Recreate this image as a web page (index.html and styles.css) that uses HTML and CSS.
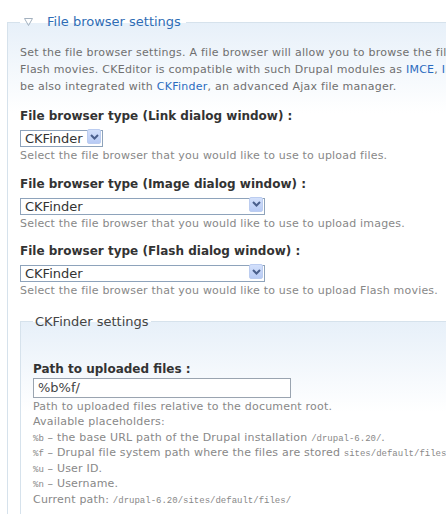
FILE: index.html
```html
<!DOCTYPE html>
<html lang="en">
<head>
    <meta charset="UTF-8">
    <meta name="viewport" content="width=device-width, initial-scale=1.0">
    <title>File browser settings</title>
    <link rel="stylesheet" href="styles.css">
</head>
<body>
    <div class="page">
        <fieldset class="group">
            <legend>
                <svg class="toggle" width="9" height="8" viewBox="0 0 9 8"><path d="M0.5 0.5 H8.5 L4.5 7.5 Z" fill="none" stroke="#a3b1bf" stroke-width="1"/></svg>
                <span>File browser settings</span>
            </legend>

            <p class="description">Set the file browser settings. A file browser will allow you to browse the files stored on the server and embed them as links, images or<br>Flash movies. CKEditor is compatible with such Drupal modules as <a href="#">IMCE</a>, <a href="#">IMCE Wysiwyg API</a>, <a href="#">WebFM</a>, <a href="#">Image Browser</a> or <a href="#">elFinder</a>. CKEditor can<br>be also integrated with <a href="#">CKFinder</a>, an advanced Ajax file manager.</p>

            <div class="form-item">
                <label>File browser type (Link dialog window) :</label>
                <div class="select-wrap short">
                    <select><option>CKFinder</option></select>
                    <span class="select-button"><svg width="9" height="6" viewBox="0 0 9 6"><path d="M1 1 L4.5 4.5 L8 1" fill="none" stroke="#4a5f8c" stroke-width="2"/></svg></span>
                </div>
                <div class="help">Select the file browser that you would like to use to upload files.</div>
            </div>

            <div class="form-item">
                <label>File browser type (Image dialog window) :</label>
                <div class="select-wrap">
                    <select><option>CKFinder</option></select>
                    <span class="select-button"><svg width="9" height="6" viewBox="0 0 9 6"><path d="M1 1 L4.5 4.5 L8 1" fill="none" stroke="#4a5f8c" stroke-width="2"/></svg></span>
                </div>
                <div class="help">Select the file browser that you would like to use to upload images.</div>
            </div>

            <div class="form-item">
                <label>File browser type (Flash dialog window) :</label>
                <div class="select-wrap">
                    <select><option>CKFinder</option></select>
                    <span class="select-button"><svg width="9" height="6" viewBox="0 0 9 6"><path d="M1 1 L4.5 4.5 L8 1" fill="none" stroke="#4a5f8c" stroke-width="2"/></svg></span>
                </div>
                <div class="help">Select the file browser that you would like to use to upload Flash movies.</div>
            </div>

            <fieldset class="group inner">
                <legend><span>CKFinder settings</span></legend>
                <div class="form-item">
                    <label>Path to uploaded files :</label>
                    <input type="text" value="%b%f/">
                    <div class="help">
                        Path to uploaded files relative to the document root.<br>
                        Available placeholders:<br>
                        <code>%b</code> – the base URL path of the Drupal installation <code>/drupal-6.20/</code>.<br>
                        <code>%f</code> – Drupal file system path where the files are stored <code>sites/default/files</code>.<br>
                        <code>%u</code> – User ID.<br>
                        <code>%n</code> – Username.<br>
                        Current path: <code>/drupal-6.20/sites/default/files/</code>
                    </div>
                </div>
            </fieldset>
        </fieldset>
    </div>
</body>
</html>
```

FILE: styles.css
```css
body {
    margin: 0;
    padding: 0;
    overflow: hidden;
    background-color: #fff;
    font-family: "DejaVu Sans", Verdana, sans-serif;
    color: #707070;
}
a {
    color: #2a6bbf;
    text-decoration: none;
}
.page {
    width: 720px;
    padding-top: 14px;
}
.group {
    margin: 0 0 0 7px;
    padding: 0 12px 40px;
    border: 1px solid #d6e2ec;
    background: linear-gradient(#e7f0f9, #fff 90px);
}
.group legend {
    display: flex;
    align-items: center;
    padding: 0 5px 0 4px;
    font-size: 13px;
    line-height: 16px;
    color: #2f6db5;
}
.toggle {
    margin-right: 14px;
}
.description {
    margin: 14px 0 0;
    font-size: 11px;
    line-height: 17px;
    letter-spacing: 0.25px;
    white-space: nowrap;
}
.form-item {
    margin-top: 12px;
}
.form-item:first-of-type {
    margin-top: 13px;
}
.form-item label {
    display: block;
    font-size: 12px;
    line-height: 16px;
    font-weight: bold;
    color: #333;
}
.select-wrap {
    position: relative;
    width: 245px;
    height: 17px;
    margin-top: 4px;
}
.select-wrap.short {
    width: 83px;
}
.select-wrap select {
    appearance: none;
    box-sizing: border-box;
    width: 100%;
    height: 17px;
    margin: 0;
    padding: 0 0 0 4px;
    border: 1px solid #8ea3bb;
    border-radius: 0;
    background: #fff;
    font-family: "DejaVu Sans", Verdana, sans-serif;
    font-size: 13px;
    line-height: 15px;
    color: #333;
}
.select-button {
    position: absolute;
    top: 1px;
    right: 2px;
    width: 14px;
    height: 15px;
    display: flex;
    align-items: center;
    justify-content: center;
    box-sizing: border-box;
    border: 1px solid #bccdf0;
    border-radius: 2px;
    background: linear-gradient(#d3e0fb, #b8cbf5);
}
.help {
    margin-top: 3px;
    font-size: 11px;
    line-height: 15.5px;
    letter-spacing: 0.2px;
    white-space: nowrap;
    color: #888;
}
.inner {
    margin: 15px 0 0;
    padding: 0 12px 40px;
}
.inner legend {
    padding: 0 2px;
    color: #444;
}
.inner .form-item {
    margin-top: 31px;
}
.inner input {
    box-sizing: border-box;
    width: 258px;
    height: 20px;
    margin-top: 1px;
    padding: 0 4px;
    border: 1px solid #9aa4b0;
    font-family: "DejaVu Sans", Verdana, sans-serif;
    font-size: 13px;
    color: #444;
}
.inner .help {
    margin-top: 1px;
}
code {
    font-family: "Liberation Mono", monospace;
    font-size: 9px;
    line-height: 1;
    letter-spacing: 0;
    color: #888;
}
```
